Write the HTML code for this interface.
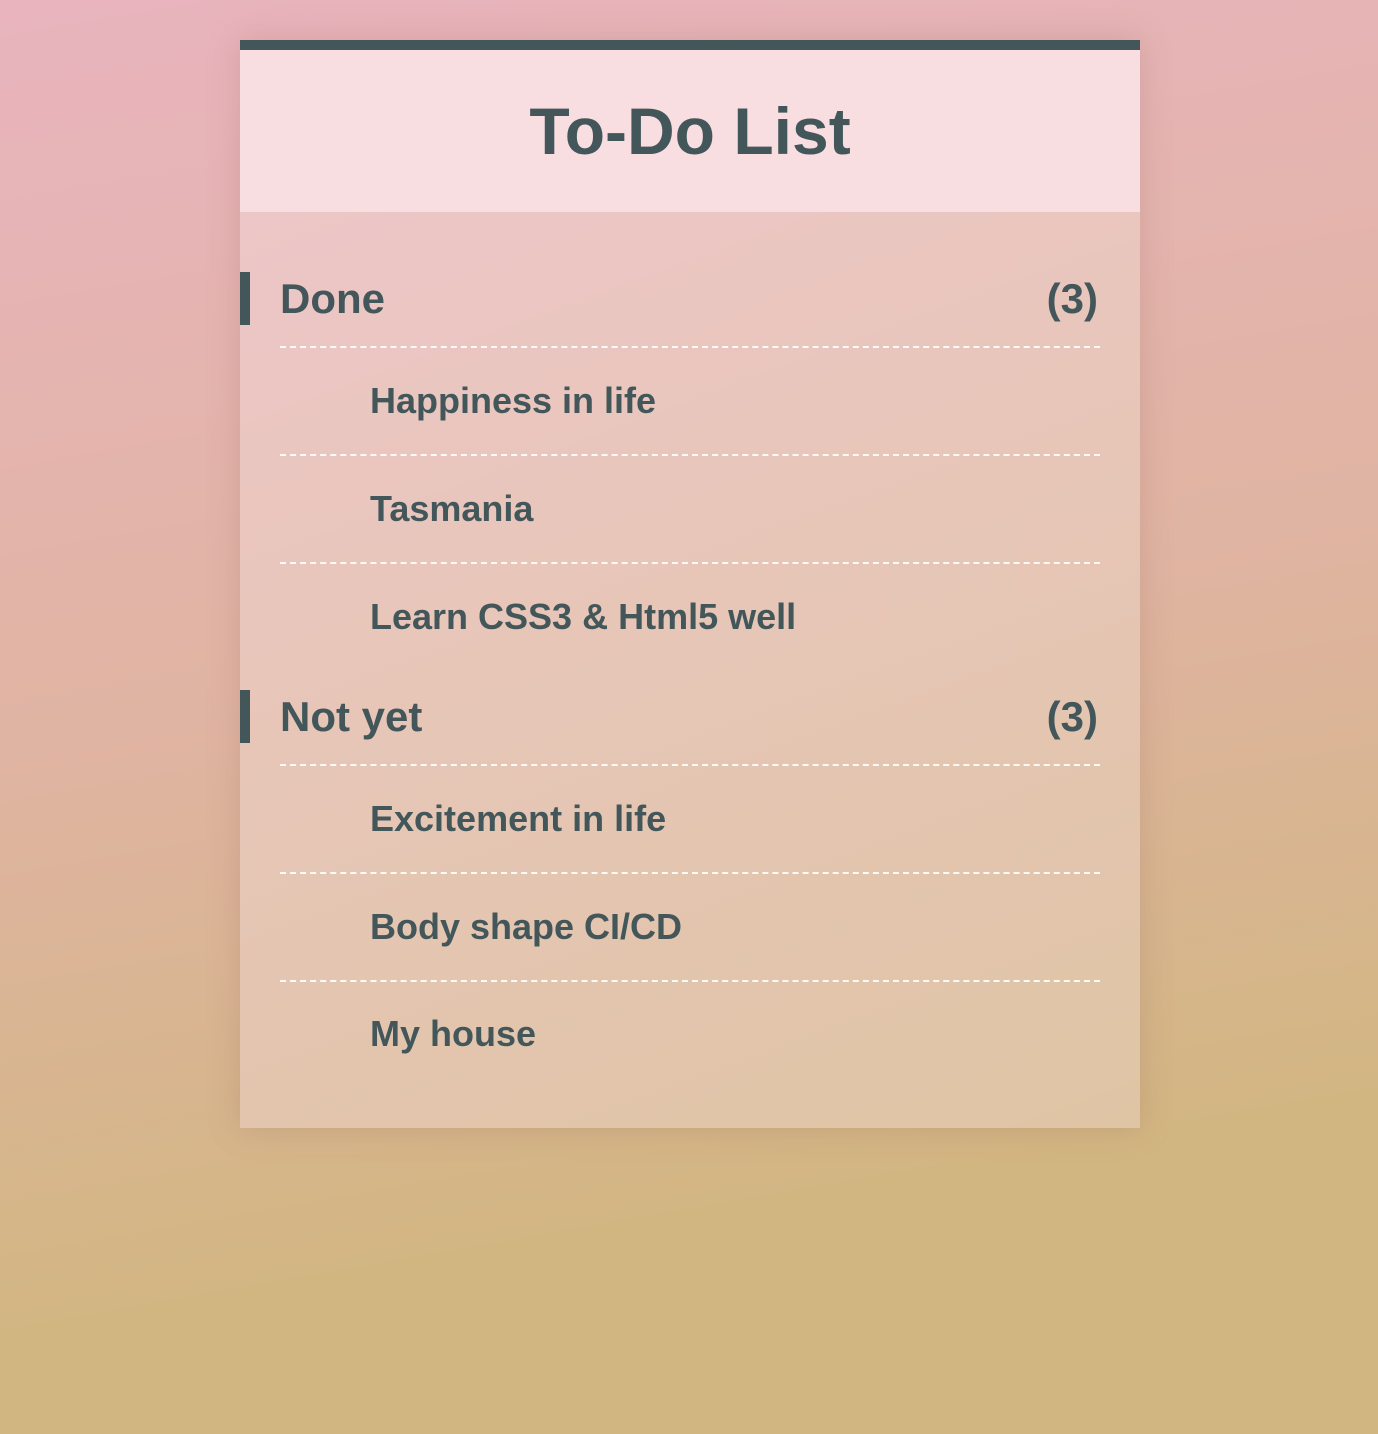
<!DOCTYPE html>
<html><head><meta charset="utf-8"><style>
html,body{margin:0;padding:0}
body{width:1378px;height:1434px;background:linear-gradient(170deg,#e9b4be 0%,#e0b4a2 45%,#d2b682 80%,#d2b682 100%);font-family:"Liberation Sans",sans-serif;color:#43575a;position:relative;overflow:hidden}
.card{position:absolute;left:240px;top:40px;width:900px;height:1088px;background:linear-gradient(160deg,#efc6cc 0%,#dfc5a4 100%);box-shadow:0 0 30px rgba(150,100,90,.25);border-top:10px solid #43575a;box-sizing:border-box}
.hd{height:162px;background:#f8dde1;text-align:center;font-weight:bold;font-size:66px;line-height:162px}
.sec{position:absolute;left:0;width:900px;height:53px}
.sec .bar{position:absolute;left:0;top:0;width:10px;height:53px;background:#43575a}
.sec .t{position:absolute;left:40px;top:0;line-height:53px;font-size:42px;font-weight:bold}
.sec .c{position:absolute;right:42px;top:0;line-height:53px;font-size:42px;font-weight:bold}
.line{position:absolute;left:40px;width:820px;border-top:2px dashed rgba(255,255,255,.9)}
.it{position:absolute;left:130px;font-size:36px;font-weight:bold;line-height:40px}
</style></head><body>
<div class="card">
<div class="hd">To-Do List</div>
<div class="sec" style="top:222px"><div class="bar"></div><div class="t">Done</div><div class="c">(3)</div></div>
<div class="line" style="top:296px"></div>
<div class="it" style="top:331px">Happiness in life</div>
<div class="line" style="top:404px"></div>
<div class="it" style="top:439px">Tasmania</div>
<div class="line" style="top:512px"></div>
<div class="it" style="top:547px">Learn CSS3 &amp; Html5 well</div>
<div class="sec" style="top:640px"><div class="bar"></div><div class="t">Not yet</div><div class="c">(3)</div></div>
<div class="line" style="top:714px"></div>
<div class="it" style="top:749px">Excitement in life</div>
<div class="line" style="top:822px"></div>
<div class="it" style="top:857px">Body shape CI/CD</div>
<div class="line" style="top:930px"></div>
<div class="it" style="top:964px">My house</div>
</div>
</body></html>
